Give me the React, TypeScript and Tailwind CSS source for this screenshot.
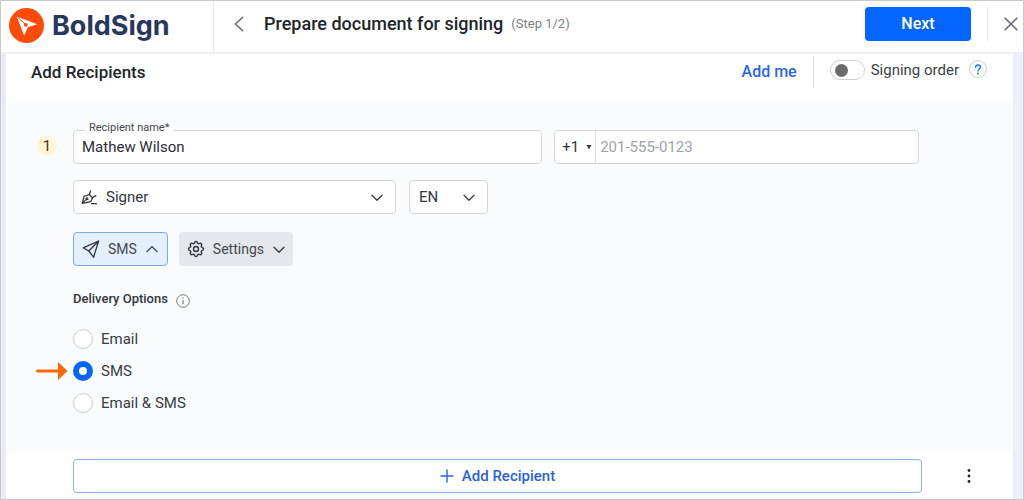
import { useState } from "react";
import type { ReactNode } from "react";
import { TbSettings } from "react-icons/tb";

function Chevron({ className, up = false }: { className?: string; up?: boolean }) {
  return (
    <svg viewBox="0 0 14 14" fill="none" stroke="currentColor" strokeWidth="1.3" strokeLinecap="round" strokeLinejoin="round" aria-hidden="true" className={className}>
      <path d={up ? "M2 9.6 7 4.6l5 5" : "M2 5.2l5 5 5-5"} />
    </svg>
  );
}

function Logo() {
  return (
    <a href="#" className="flex items-center gap-2">
      <svg viewBox="0 0 35 35" className="size-[35px]" aria-hidden="true">
        <circle cx="17.5" cy="17.5" r="17.5" fill="#ff4b0a" />
        <path d="M7.8 8.6 28.2 16.2 18.8 19.2 15.2 27.8Z" fill="#fff" />
        <path d="M8.6 9.2 16.2 16.2" stroke="#ff4b0a" strokeWidth="1" />
        <circle cx="16.8" cy="16.8" r="1.9" fill="#ff4b0a" />
      </svg>
      <span className="font-[Inter,sans-serif] text-[27px] leading-8 font-bold text-[#27375e]">BoldSign</span>
    </a>
  );
}

function Header() {
  return (
    <header className="flex h-[53px] shrink-0 items-stretch border-b-2 border-[#efeff1] bg-white">
      <div className="flex w-[213px] shrink-0 items-center border-r border-[#e7e8ea] pb-0.5 pl-2">
        <Logo />
      </div>
      <div className="flex min-w-0 flex-1 items-center pb-1.5 pl-5">
        <button type="button" aria-label="Back" className="mr-5 text-[#6b7089]">
          <svg viewBox="0 0 10 16" fill="none" stroke="currentColor" strokeWidth="1.6" strokeLinecap="round" strokeLinejoin="round" className="h-4 w-2.5" aria-hidden="true">
            <path d="M8.6 1.4 1.4 8l7.2 6.6" />
          </svg>
        </button>
        <h1 className="text-lg leading-6 font-medium whitespace-nowrap text-[#212529]">Prepare document for signing</h1>
        <span className="ml-2 text-[13px] leading-6 whitespace-nowrap text-[#7d7f85]">(Step 1/2)</span>
      </div>
      <div className="flex items-center pb-1.5">
        <button type="button" className="h-[34px] w-[106px] rounded bg-[#0565ff] text-base font-medium text-white">Next</button>
        <span className="ml-4 h-[34px] border-l border-[#e9eaec]" />
        <button type="button" aria-label="Close" className="mr-[5px] ml-4 text-[#646b7a]">
          <svg viewBox="0 0 14 14" fill="none" stroke="currentColor" strokeWidth="1.6" strokeLinecap="round" className="size-3.5" aria-hidden="true">
            <path d="M1.2 1.2l11.6 11.6M12.8 1.2 1.2 12.8" />
          </svg>
        </button>
      </div>
    </header>
  );
}

function SectionHeader() {
  return (
    <div className="flex h-12 shrink-0 items-start bg-white pt-[2px] pr-[26px] pl-[25px]">
      <h2 className="mt-1 flex-1 text-[17px] leading-6 font-medium text-[#212529]">Add Recipients</h2>
      <button type="button" className="mt-1 text-base leading-6 font-medium text-[#2b66e8]">Add me</button>
      <span className="ml-4 h-8 border-l border-[#dcdde0]" />
      <label className="mt-0.5 ml-4 flex items-center gap-1.5 text-[15px] leading-6 text-[#3c3f45]">
        <input
          type="checkbox"
          role="switch"
          className="flex h-5 w-[35px] appearance-none items-center rounded-full border border-[#cfd0d2] bg-white px-1 before:size-[13px] before:rounded-full before:bg-[#6b6b6b] checked:justify-end checked:before:bg-[#0565ff]"
        />
        Signing order
      </label>
      <button type="button" aria-label="Help" className="mt-1 ml-2.5 flex size-[18px] items-center justify-center rounded-full border border-[#c9cdd3] text-[#1a7cf0]">
        <svg viewBox="0 0 8 12" fill="none" stroke="currentColor" strokeWidth="1.5" strokeLinecap="round" className="h-[11px] w-2" aria-hidden="true">
          <path d="M1.4 3.6C1.4 2 2.5 1.1 4 1.1s2.6 1 2.6 2.4C6.6 5.4 4 5.4 4 7.6" />
          <circle cx="4" cy="10.4" r="0.4" />
        </svg>
      </button>
    </div>
  );
}

const field = "rounded border border-[#d3d5d8] bg-white";

function PenIcon() {
  return (
    <svg viewBox="0 0 16 16" fill="none" stroke="#30343b" strokeWidth="1.3" strokeLinecap="round" strokeLinejoin="round" className="size-4" aria-hidden="true">
      <path d="M1.3 14.4 3 7.3l5.2-1.8 3.3 3.3-1.7 3.8-8.5 1.8Z" />
      <path d="M8.2 5.5 9.6 2M11.5 8.8l3.3-2.2M1.6 14.1l3.7-3.7M10.4 14.6h5" />
      <circle cx="6" cy="9.8" r="0.9" />
    </svg>
  );
}

function Picker({ label, options, icon, className, selectClass }: { label: string; options: string[]; icon?: ReactNode; className: string; selectClass: string }) {
  return (
    <div className={`relative flex h-[34px] items-center ${className}`}>
      <select aria-label={label} className={`h-full w-full appearance-none text-[15px] text-[#33363d] ${field} ${selectClass}`}>
        {options.map((o) => (
          <option key={o}>{o}</option>
        ))}
      </select>
      {icon && <span className="pointer-events-none absolute left-2">{icon}</span>}
      <Chevron className="pointer-events-none absolute right-3 size-3.5 text-[#3a3d44]" />
    </div>
  );
}

function DeliveryOptions() {
  const [choice, setChoice] = useState("SMS");
  return (
    <fieldset className="mt-[21px]">
      <legend className="flex items-center gap-2 text-[13px] leading-6 font-medium text-[#33363b]">
        Delivery Options
        <svg viewBox="0 0 14 14" fill="none" stroke="#777b84" className="mt-1 size-3.5" aria-hidden="true">
          <circle cx="7" cy="7" r="6.3" />
          <path d="M7 6.2v4M7 3.6v1.2" strokeWidth="1.2" />
        </svg>
      </legend>
      <div className="mt-4 flex flex-col gap-2">
        {["Email", "SMS", "Email & SMS"].map((name) => (
          <div key={name} className="relative flex">
            {name === "SMS" && (
              <svg viewBox="0 0 32 20" className="absolute top-0.5 right-full mr-[5px] h-5 w-8" aria-hidden="true">
                <path d="M1.5 10h22" stroke="#fb6707" strokeWidth="3" strokeLinecap="round" />
                <path d="M22 1 31.5 10 22 19Z" fill="#fb6707" />
              </svg>
            )}
            <label className="flex items-center gap-2 text-[15px] leading-6 text-[#3a3c41]">
              <input
                type="radio"
                name="delivery"
                value={name}
                checked={choice === name}
                onChange={() => setChoice(name)}
                className="size-5 appearance-none rounded-full border border-[#cbccd0] bg-white checked:border-[6px] checked:border-[#0565ff]"
              />
              {name}
            </label>
          </div>
        ))}
      </div>
    </fieldset>
  );
}

function Recipient() {
  return (
    <section className="flex flex-1 gap-4 bg-[#f9fbfd] pt-7 pr-[94px] pb-8 pl-[31px]">
      <span className="mt-1.5 flex size-5 shrink-0 items-center justify-center rounded-full bg-[#fff6d2] text-[15px] text-[#33363b]">1</span>
      <div className="min-w-0 flex-1">
        <div className="grid grid-cols-[9fr_7fr] gap-3">
          <div className="relative">
            <label htmlFor="recipient" className="absolute -top-2 left-3 bg-linear-to-b from-[#f9fbfd] from-50% to-white to-50% px-1 text-[11px] leading-3 text-[#44474d]">Recipient name*</label>
            <input id="recipient" defaultValue="Mathew Wilson" className={`h-[34px] w-full px-2 text-[15px] text-[#2b2e35] ${field}`} />
          </div>
          <div className={`flex h-[34px] items-center ${field}`}>
            <div className="relative flex h-full w-[41px] shrink-0 items-center border-r border-[#dcdde0]">
              <select aria-label="Country code" className="h-full w-full appearance-none pl-[7px] text-[15px] text-[#33363d]">
                <option>+1</option>
                <option>+44</option>
              </select>
              <svg viewBox="0 0 6 5" className="pointer-events-none absolute right-[3px] h-[5px] w-1.5" aria-hidden="true">
                <path d="M0.5 0h5L3 4.4Z" fill="#33363d" />
              </svg>
            </div>
            <input type="tel" aria-label="Phone number" placeholder="201-555-0123" className="h-full min-w-0 flex-1 bg-transparent px-1 text-[15px] placeholder:text-[#a0a2a9]" />
          </div>
        </div>
        <div className="mt-4 flex gap-[13px]">
          <Picker label="Role" options={["Signer", "Reviewer"]} icon={<PenIcon />} className="w-[323px]" selectClass="pl-8" />
          <Picker label="Language" options={["EN", "FR"]} className="w-[79px]" selectClass="pl-[9px]" />
        </div>
        <div className="mt-[18px] flex gap-[11px]">
          <button type="button" className="flex h-[34px] items-center rounded border border-[#7ea9f0] bg-[#e3effd] px-2 text-sm text-[#44474f]">
            <svg viewBox="0 0 18 18" fill="none" stroke="#30343b" strokeWidth="1.3" strokeLinejoin="round" strokeLinecap="round" className="mr-2 size-[18px]" aria-hidden="true">
              <path d="M16.6 1 1.2 7.8l5.6 3.2L11.6 17.2 16.6 1ZM16.6 1 6.8 11" />
            </svg>
            SMS
            <Chevron up className="ml-2 size-3.5 text-[#33363d]" />
          </button>
          <button type="button" className="flex h-[34px] items-center rounded bg-[#e5e7ed] px-[7px] text-sm text-[#44474f]">
            <TbSettings className="mr-[7px] size-5 stroke-[1.7] text-[#30343b]" aria-hidden="true" />
            Settings
            <Chevron className="ml-2 size-3.5 text-[#33363d]" />
          </button>
        </div>
        <DeliveryOptions />
      </div>
    </section>
  );
}

export default function App() {
  return (
    <div className="flex min-h-screen flex-col border border-[#c9c9cd] bg-white font-[Roboto,sans-serif]">
      <Header />
      <main className="flex flex-1 flex-col border-r-10 border-l-5 border-r-[#ebf0f8] border-l-[#e9ecf5]">
        <SectionHeader />
        <Recipient />
        <div className="flex shrink-0 items-center bg-white pt-2 pr-9 pb-1.5 pl-[67px]">
          <button type="button" className="flex h-[34px] flex-1 items-center justify-center gap-2 rounded border border-[#8fb0f1] text-[15px] font-medium text-[#2b62d9]">
            <svg viewBox="0 0 14 14" fill="none" stroke="currentColor" strokeWidth="1.4" strokeLinecap="round" className="size-3.5" aria-hidden="true">
              <path d="M7 1v12M1 7h12" />
            </svg>
            Add Recipient
          </button>
          <button type="button" aria-label="More options" className="ml-[39px] flex w-4 justify-center">
            <svg viewBox="0 0 4 16" className="h-4 w-1" fill="#222" aria-hidden="true">
              <circle cx="2" cy="2.5" r="1.4" />
              <circle cx="2" cy="8" r="1.4" />
              <circle cx="2" cy="13.5" r="1.4" />
            </svg>
          </button>
        </div>
      </main>
    </div>
  );
}
